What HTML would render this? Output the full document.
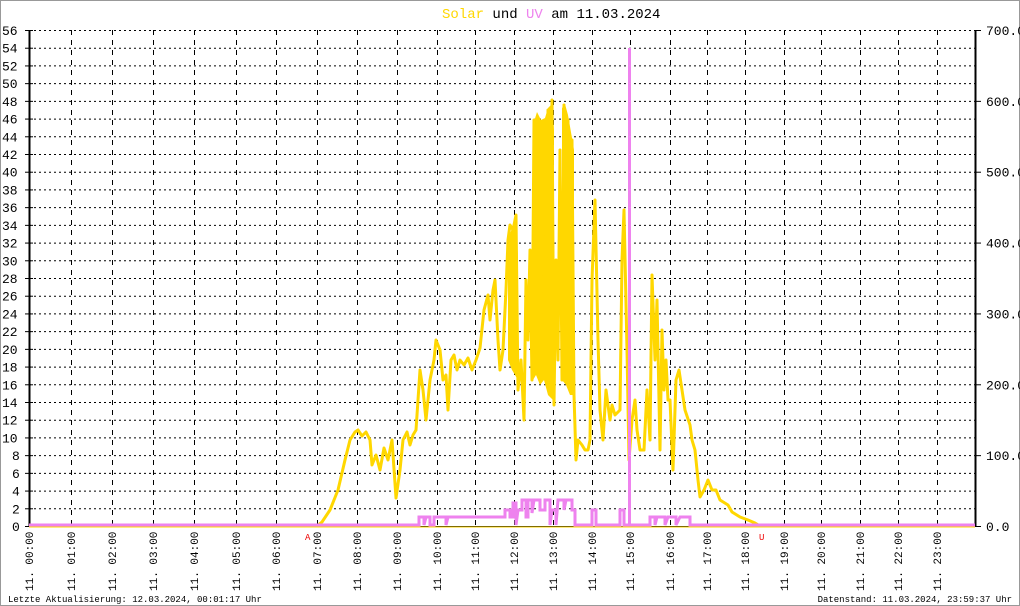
<!DOCTYPE html>
<html><head><meta charset="utf-8"><style>
html,body{margin:0;padding:0;background:#fff}
svg{display:block}
text{font-family:"Liberation Mono","DejaVu Sans Mono",monospace}
</style></head><body>
<svg id="s" width="1020" height="606" viewBox="0 0 1020 606" xmlns="http://www.w3.org/2000/svg">
<rect x="0.5" y="0.5" width="1019" height="605" fill="#fff" stroke="#999"/>
<text x="442" y="18" font-size="14"><tspan fill="#ffd700">Solar</tspan> und <tspan fill="#ee82ee">UV</tspan> am 11.03.2024</text>
<g id="grid"></g>
<polygon fill="#ffd700" points="533,125 537,112 541,120 545,118 548,108 552,104 554,130 553,400 548,395 544,380 540,385 536,375 533,380"/>
<polygon fill="#ffd700" points="562,108 565,104 568,115 572,138 574,150 574,395 570,395 566,385 562,380"/>
<polygon fill="#ffd700" points="508,240 512,228 516,218 518,260 518,380 512,370 508,360"/>
<polyline fill="none" stroke="#ffd700" stroke-width="3" stroke-linejoin="round" points="29,526 317,526 322,522 330,510 338,490 345,460 350,440 355,432 358,430 362,436 366,432 370,440 372,465 376,455 380,470 384,448 388,460 392,440 396,498 400,470 403,440 407,432 410,445 413,435 416,430 418,400 420,370 423,390 426,420 430,380 434,360 436,340 440,350 443,380 446,375 448,410 451,360 454,355 457,370 460,360 464,365 468,358 472,370 476,360 480,348 484,310 488,295 490,320 493,290 495,280 498,340 500,370 503,350 506,290 508,240 510,225 513,230 516,215 518,390 521,360 524,420 526,280 528,340 530,250 532,380 534,120 536,370 538,125 540,380 542,130 545,360 548,110 550,330 552,100 554,405 556,260 558,360 560,150 562,380 564,105 566,350 568,120 570,390 572,140 574,395 576,460 578,440 582,445 585,450 588,450 590,440 592,280 595,200 598,340 600,410 603,440 606,390 610,420 612,405 615,415 620,410 622,260 624,210 627,350 629,460 632,420 635,400 637,430 640,450 644,450 647,390 650,440 652,275 655,360 657,300 660,450 662,330 664,390 666,360 668,400 670,400 673,470 676,380 679,370 682,390 685,410 690,425 692,440 695,450 698,480 700,497 704,490 708,480 712,490 716,490 720,500 728,505 732,512 740,517 748,520 755,523 760,526 975,526"/>
<polyline fill="none" stroke="#ee82ee" stroke-width="3" points="29,525 419,525 419,517 424,517 424,525 426,517 430,517 430,525 434,525 434,517 446,517 446,525 448,517 505,517 505,510 510,510 510,517 513,517 513,503 516,503 516,525 518,510 522,510 522,500 526,500 526,517 528,517 528,500 532,500 532,513 534,500 540,500 540,510 545,510 545,500 550,500 550,525 552,510 556,510 556,525 558,500 564,500 564,510 566,500 572,500 572,510 575,510 575,525 592,525 592,510 596,510 596,525 600,525 620,525 620,510 624,510 624,525 650,525 650,517 655,517 655,525 657,517 665,517 665,525 668,517 676,517 676,525 680,517 690,517 690,525 975,525"/>
<rect x="628" y="48" width="3" height="478" fill="#ee82ee"/>
<line x1="29" y1="527" x2="975" y2="527" stroke="#ffd700" stroke-width="1"/>
<text x="305" y="540" font-size="9" fill="#e00">A</text>
<text x="759" y="540" font-size="9" fill="#e00">U</text>
<text x="8" y="602" font-size="9">Letzte Aktualisierung: 12.03.2024, 00:01:17 Uhr</text>
<text x="1012" y="602" font-size="9" text-anchor="end">Datenstand: 11.03.2024, 23:59:37 Uhr</text>
</svg>
<script>
var g=document.getElementById('grid'),h='';
var xs=[29,71,112,153,194,236,276,317,357,397,437,475,514,553,592,630,670,707,745,784,821,860,898,937,975];
for(var v=0;v<=56;v+=2){var y=526-v*496/56;
 if(v>0)h+='<line x1="29" x2="975" y1="'+(y+.5)+'" y2="'+(y+.5)+'" stroke="#000" stroke-dasharray="2,3"/>';
 h+='<line x1="25" x2="33" y1="'+(y+.5)+'" y2="'+(y+.5)+'" stroke="#000"/>';
 h+='<text x="'+(v<10?12:2)+'" y="'+(y+5)+'" font-size="13">'+v+'</text>';}
for(var k=0;k<=7;k++){var y=526-k*496/7;
 h+='<line x1="975" x2="981" y1="'+(y+.5)+'" y2="'+(y+.5)+'" stroke="#000"/>';
 h+='<text x="986" y="'+(y+5)+'" font-size="13">'+(k==0?'0.0':k*100+'.0')+'</text>';}
for(var i=1;i<24;i++){var x=xs[i]+.5;
 h+='<line x1="'+x+'" x2="'+x+'" y1="30" y2="526" stroke="#000" stroke-dasharray="5,5"/>';}
for(var i=0;i<24;i++){var x=xs[i]+4;var hh=(i<10?'0':'')+i;
 h+='<text transform="translate('+x+',591) rotate(-90)" font-size="11">11. '+hh+':00</text>';}
h+='<line x1="29.5" x2="29.5" y1="30" y2="527" stroke="#000" stroke-width="2"/>';
h+='<line x1="975.5" x2="975.5" y1="30" y2="527" stroke="#000" stroke-width="2"/>';
h+='<line x1="29" x2="976" y1="526.5" y2="526.5" stroke="#000"/>';
g.innerHTML=h;
</script>
</body></html>
